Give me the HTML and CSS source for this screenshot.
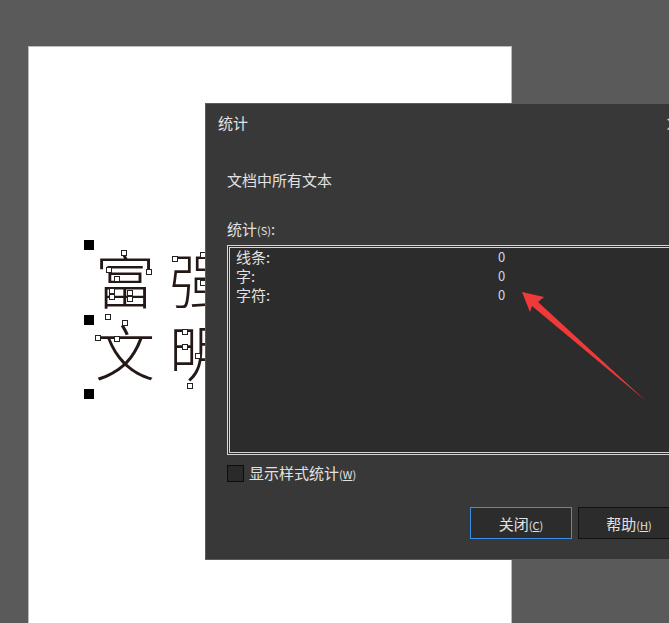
FILE: index.html
```html
<!DOCTYPE html>
<html lang="zh-CN">
<head>
  <meta charset="UTF-8">
  <title>统计</title>
  <link rel="stylesheet" href="styles.css">
</head>
<body>

  <div class="workspace">
    <div class="page">
      <div class="art-text">
        <div class="art-line">富强</div>
        <div class="art-line">文明</div>
      </div>
    </div>

    <!-- selection handles and nodes, page coordinates -->
    <div class="handle" style="left:84px;top:240px"></div>
    <div class="handle" style="left:84px;top:315px"></div>
    <div class="handle" style="left:84px;top:389px"></div>

    <div class="node" style="left:121px;top:250px"></div>
    <div class="node" style="left:106px;top:267px"></div>
    <div class="node" style="left:146px;top:269px"></div>
    <div class="node" style="left:114px;top:276px"></div>
    <div class="node" style="left:109px;top:288px"></div>
    <div class="node" style="left:127px;top:290px"></div>
    <div class="node" style="left:109px;top:294px"></div>
    <div class="node" style="left:127px;top:296px"></div>
    <div class="node" style="left:105px;top:314px"></div>
    <div class="node" style="left:122px;top:320px"></div>
    <div class="node" style="left:95px;top:335px"></div>
    <div class="node" style="left:114px;top:336px"></div>
    <div class="node" style="left:172px;top:256px"></div>
    <div class="node" style="left:200px;top:252px"></div>
    <div class="node" style="left:200px;top:280px"></div>
    <div class="node" style="left:182px;top:329px"></div>
    <div class="node" style="left:182px;top:344px"></div>
    <div class="node" style="left:195px;top:353px"></div>
    <div class="node" style="left:187px;top:383px"></div>

    <div class="dialog">
      <div class="dialog-title">统计</div>
      <div class="dialog-close">×</div>

      <div class="dialog-body">
        <p class="scope">文档中所有文本</p>
        <p class="list-label">统计<span class="key">(S)</span>:</p>

        <div class="stats-list">
          <div class="stats-row"><span class="stats-name">线条:</span><span class="stats-value">0</span></div>
          <div class="stats-row"><span class="stats-name">字:</span><span class="stats-value">0</span></div>
          <div class="stats-row"><span class="stats-name">字符:</span><span class="stats-value">0</span></div>
        </div>

        <label class="check">
          <span class="check-box"></span>
          <span>显示样式统计<span class="key">(<u>W</u>)</span></span>
        </label>

        <div class="dialog-buttons">
          <button class="btn btn-default">关闭<span class="key">(<u>C</u>)</span></button>
          <button class="btn">帮助<span class="key">(<u>H</u>)</span></button>
        </div>
      </div>
    </div>

    <svg class="arrow" width="669" height="623" viewBox="0 0 669 623">
      <polygon points="522,292 544,297 538,302 646,401 532,306 530,312" fill="#f03a3a"/>
    </svg>
  </div>

</body>
</html>
```

FILE: styles.css
```css
* {
  box-sizing: border-box;
  margin: 0;
  padding: 0;
}

body {
  width: 669px;
  height: 623px;
  overflow: hidden;
  background-color: #5a5a5a;
  font-family: "Noto Sans CJK SC", "Noto Sans", sans-serif;
}

.workspace {
  position: relative;
  width: 669px;
  height: 623px;
  padding: 46px 0 0 28px;
}

.page {
  position: relative;
  width: 484px;
  height: 600px;
  background-color: #fff;
  border: 1px solid #bcbcbc;
}

.art-text {
  position: absolute;
  left: 66px;
  top: 195px;
  font-family: "Noto Sans CJK SC", sans-serif;
  font-weight: 300;
  font-size: 60px;
  line-height: 72px;
  letter-spacing: 14px;
  color: #231815;
}

.handle {
  position: absolute;
  width: 10px;
  height: 10px;
  background-color: #000;
}

.node {
  position: absolute;
  width: 6px;
  height: 6px;
  background-color: #fff;
  border: 1px solid #222;
}

/* dialog */
.dialog {
  position: absolute;
  left: 205px;
  top: 103px;
  width: 490px;
  height: 457px;
  background-color: #383838;
  border: 1px solid #5c5c5c;
  color: #e2e2e2;
}

.dialog-title {
  padding: 9px 0 0 12px;
  height: 38px;
  font-size: 15px;
  line-height: 20px;
}

.dialog-close {
  position: absolute;
  top: 6px;
  left: 458px;
  font-size: 18px;
  color: #ddd;
}

.dialog-body {
  padding: 0 0 0 21px;
}

.scope {
  margin-top: 28px;
  font-size: 15px;
  line-height: 20px;
}

.list-label {
  margin-top: 29px;
  font-size: 15px;
  line-height: 20px;
}

.key {
  font-size: 11px;
}

.stats-list {
  margin-top: 5px;
  width: 470px;
  height: 210px;
  background-color: #2c2c2c;
  border: 3px double #d6d6d6;
  padding: 0 0 0 6px;
}

.stats-row {
  display: flex;
  height: 19px;
  margin-top: -1px;
  font-size: 15px;
  line-height: 19px;
}

.stats-row + .stats-row {
  margin-top: 0;
}

.stats-name {
  width: 262px;
}

.stats-value {
  color: #cdd8e4;
  font-size: 13px;
}

.check {
  display: flex;
  align-items: center;
  gap: 5px;
  margin-top: 9px;
  font-size: 15px;
  line-height: 18px;
}

.check-box {
  width: 17px;
  height: 17px;
  background-color: #2a2a2a;
  border: 1px solid #0d0d0d;
}

.dialog-buttons {
  display: flex;
  gap: 6px;
  margin-top: 24px;
  padding-left: 243px;
}

.btn {
  width: 102px;
  height: 32px;
  background-color: #2c2c2c;
  border: 1px solid #111;
  color: #e2e2e2;
  font-family: "Noto Sans CJK SC", sans-serif;
  font-size: 15px;
}

.btn-default {
  border-color: #3a8ee6;
}

.arrow {
  position: absolute;
  left: 0;
  top: 0;
}
```
